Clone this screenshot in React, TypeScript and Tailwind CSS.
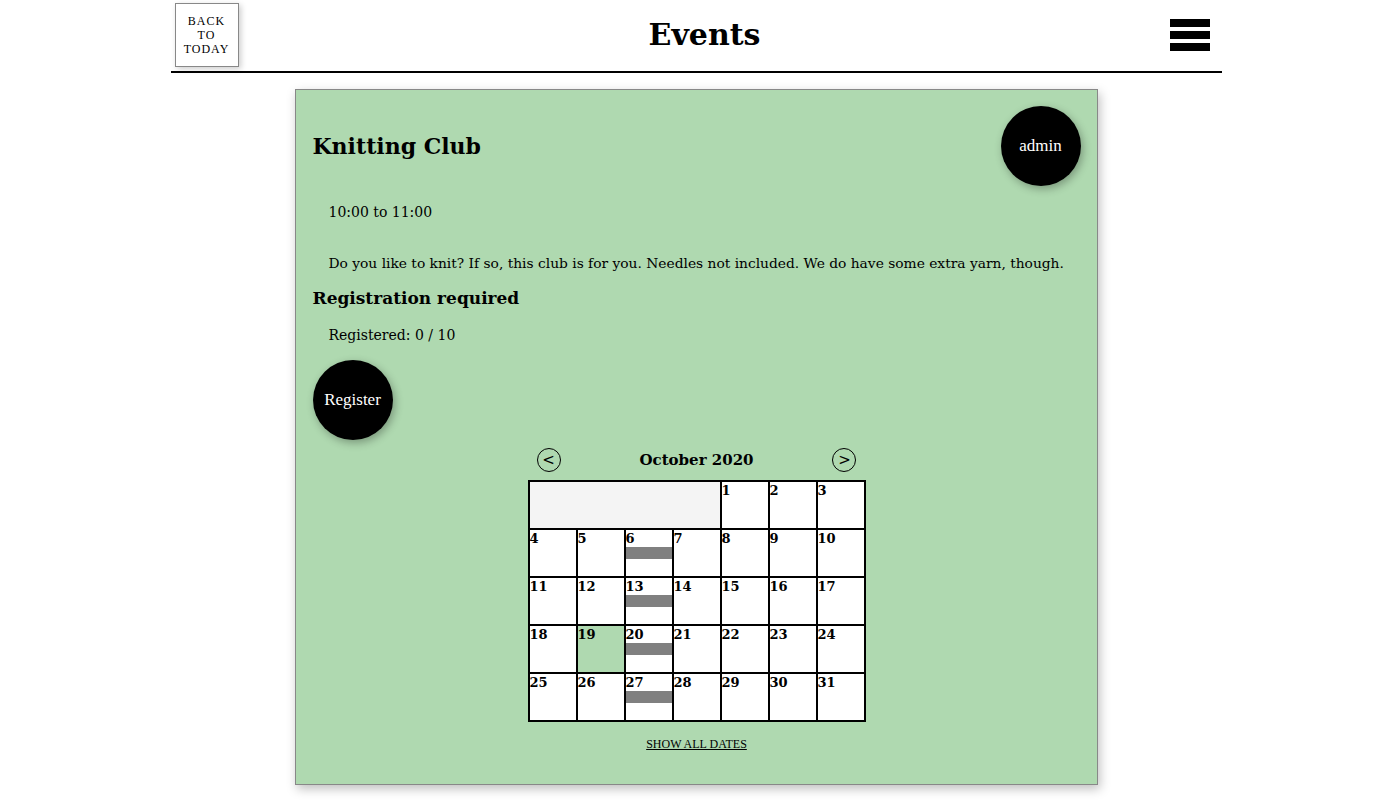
import React from "react"

const serif = { fontFamily: '"DejaVu Serif", Georgia, serif' }

const days = Array.from({ length: 31 }, (_, i) => i + 1)
const eventDays = [6, 13, 20, 27]
const today = 19

const Header = () => {
  return (
    <div className="mx-auto w-[1051px] border-b-2 border-black flex items-center justify-between pl-1 pr-[11px] h-[73px] pb-[2px]">
      <button className="w-16 h-16 border border-[#888] bg-white shadow-[2px_2px_6px_rgba(0,0,0,0.2)] text-[12px] leading-[14px] tracking-[1px] text-black uppercase font-['Liberation_Serif',serif]">
        Back
        <br />
        To
        <br />
        Today
      </button>
      <h1 className="text-[30px] font-bold text-black" style={serif}>
        Events
      </h1>
      <div className="flex flex-col gap-1 w-10">
        <span className="block h-2 bg-black"></span>
        <span className="block h-2 bg-black"></span>
        <span className="block h-2 bg-black"></span>
      </div>
    </div>
  )
}

const Calendar = () => {
  return (
    <div className="flex flex-col items-center">
      <div className="flex items-center justify-between w-[320px] h-6 mt-2">
        <button className="w-6 h-6 rounded-full border border-black flex items-center justify-center text-[15px] leading-none font-['DejaVu_Sans',sans-serif]">&lt;</button>
        <span className="font-bold text-[15px]" style={serif}>October 2020</span>
        <button className="w-6 h-6 rounded-full border border-black flex items-center justify-center text-[15px] leading-none font-['DejaVu_Sans',sans-serif]">&gt;</button>
      </div>
      <div className="mt-2 grid grid-cols-[repeat(7,46px)] auto-rows-[46px] gap-[2px] p-[2px] bg-black">
        <div className="col-span-4 bg-[#f4f4f4]"></div>
        {days.map((d) => (
          <div key={d} className={d === today ? "bg-[#afd9b0]" : "bg-white"}>
            <div className="font-bold text-[13px] leading-[16px] pt-[1px]" style={serif}>{d}</div>
            {eventDays.includes(d) && <div className="h-3 bg-[#808080]"></div>}
          </div>
        ))}
      </div>
      <a href="#" className="mt-[14px] text-[12px] leading-4 underline text-black font-['Liberation_Serif',serif]">SHOW ALL DATES</a>
    </div>
  )
}

export default function App() {
  return (
    <div className="w-[1392px] min-h-screen bg-white text-black">
      <Header />
      <div className="w-[803px] mx-auto mt-4 bg-[#afd9b0] border border-[#888] shadow-[2px_4px_10px_rgba(0,0,0,0.25)] pr-4 pl-[17px] pt-4 pb-8" style={serif}>
        <div className="flex items-center justify-between h-20">
          <h2 className="text-[22px] font-bold">Knitting Club</h2>
          <button className="w-20 h-20 rounded-full bg-black text-white text-[17px] shadow-[2px_3px_8px_rgba(0,0,0,0.3)] font-['Liberation_Serif',serif]">admin</button>
        </div>
        <p className="mt-[14px] ml-4 text-[14px] leading-6">10:00 to 11:00</p>
        <p className="mt-[27px] ml-4 text-[13.8px] leading-6">
          Do you like to knit? If so, this club is for you. Needles not included. We do have some extra yarn, though.
        </p>
        <h3 className="mt-[11px] text-[17px] leading-6 font-bold">Registration required</h3>
        <p className="mt-[13px] ml-4 text-[14px] leading-6">Registered: 0 / 10</p>
        <button className="mt-[13px] w-20 h-20 rounded-full bg-black text-white text-[17px] shadow-[2px_3px_8px_rgba(0,0,0,0.3)] font-['Liberation_Serif',serif]">Register</button>
        <Calendar />
      </div>
    </div>
  )
}
